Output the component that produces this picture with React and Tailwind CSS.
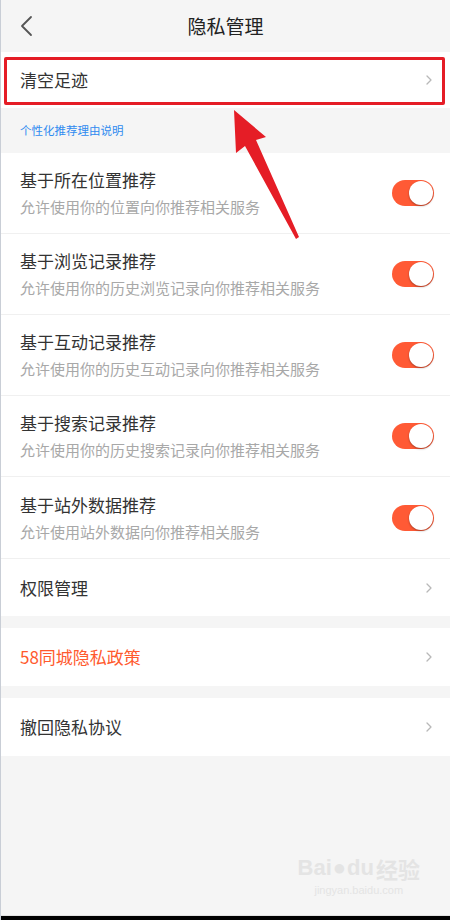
import React from "react";

const font = { fontFamily: '"Noto Sans CJK SC", "Noto Sans", sans-serif' };

function Chevron() {
  return (
    <svg width="8" height="12" viewBox="0 0 8 12" className="shrink-0">
      <path d="M2 2 L6 6 L2 10" fill="none" stroke="#b8b8b8" strokeWidth="1.3" strokeLinecap="round" strokeLinejoin="round" />
    </svg>
  );
}

function Toggle() {
  return (
    <div className="w-[42px] h-[26px] rounded-full bg-[#ff5a35] flex items-center justify-end pr-[1px] shrink-0">
      <div className="w-[24px] h-[24px] rounded-full bg-white shadow-[0_1px_2px_rgba(0,0,0,0.35)]" />
    </div>
  );
}

function ToggleRow({ title, sub, last }) {
  return (
    <div className={"h-[81px] bg-white flex items-center pl-[19px] pr-[16px] " + (last ? "" : "border-b border-[#f0f0f0]")}>
      <div className="flex-1 flex flex-col">
        <div className="text-[17px] leading-[22px] text-[#333]">{title}</div>
        <div className="text-[15px] leading-[20px] text-[#a8a8a8] mt-[6px]">{sub}</div>
      </div>
      <Toggle />
    </div>
  );
}

function LinkRow({ title, color = "text-[#333]", border }) {
  return (
    <div className={"h-[58px] bg-white flex items-center pl-[19px] pr-[17px] " + (border ? "border-t border-[#f0f0f0]" : "")}>
      <div className={"flex-1 text-[17px] " + color}>{title}</div>
      <Chevron />
    </div>
  );
}

export default function App() {
  return (
    <div style={font} className="relative w-[450px] h-[920px] bg-[#f5f5f5] overflow-hidden flex flex-col border-l border-[#c9ced6]">
      {/* Header */}
      <div className="h-[52px] grid grid-cols-[50px_1fr_50px] items-center shrink-0">
        <div className="pl-[19px] flex items-center">
          <svg width="14" height="22" viewBox="0 0 14 22">
            <path d="M11 2 L2 11 L11 20" fill="none" stroke="#555" strokeWidth="1.8" strokeLinecap="round" strokeLinejoin="round" />
          </svg>
        </div>
        <div className="text-center text-[19px] text-[#222]">隐私管理</div>
        <div />
      </div>

      {/* Clear footprints */}
      <div className="h-[56px] bg-white flex items-center pl-[19px] pr-[17px] shrink-0">
        <div className="flex-1 text-[17px] text-[#333]">清空足迹</div>
        <Chevron />
      </div>

      {/* Section header */}
      <div className="h-[45px] flex items-center pl-[19px] shrink-0">
        <span className="text-[11.5px] text-[#2f8bf0]">个性化推荐理由说明</span>
      </div>

      <div className="flex flex-col shrink-0">
        <ToggleRow title="基于所在位置推荐" sub="允许使用你的位置向你推荐相关服务" />
        <ToggleRow title="基于浏览记录推荐" sub="允许使用你的历史浏览记录向你推荐相关服务" />
        <ToggleRow title="基于互动记录推荐" sub="允许使用你的历史互动记录向你推荐相关服务" />
        <ToggleRow title="基于搜索记录推荐" sub="允许使用你的历史搜索记录向你推荐相关服务" />
        <ToggleRow title="基于站外数据推荐" sub="允许使用站外数据向你推荐相关服务" last />
        <LinkRow title="权限管理" border />
      </div>

      <div className="h-[12px] shrink-0" />
      <LinkRow title="58同城隐私政策" color="text-[#ff5a2e]" />
      <div className="h-[12px] shrink-0" />
      <LinkRow title="撤回隐私协议" />

      <div className="flex-1" />
      <div className="h-[1px] bg-[#e2e2e2] shrink-0" />
      <div className="h-[4px] bg-black shrink-0" />

      {/* Annotation: red box */}
      <div className="absolute left-[3px] top-[57px] w-[441px] h-[48px] border-[3px] border-[#e51d26] rounded-[2px] pointer-events-none" />

      {/* Annotation: arrow */}
      <svg className="absolute left-0 top-0 pointer-events-none" width="450" height="920" viewBox="0 0 450 920">
        <polygon points="233,110 265,137 255,140 298,237 295,239 244,146 235,153" fill="#e51d26" />
      </svg>

      {/* Watermark */}
      <div className="absolute right-[30px] bottom-[22px] flex flex-col items-center pointer-events-none">
        <div className="flex items-end text-[22px] font-bold text-[#e4e4e4] leading-none" style={{ fontFamily: '"Liberation Sans", sans-serif' }}>
          <span>Bai</span>
          <span className="mx-[1px] text-[#e4e4e4]">●</span>
          <span>du</span>
          <span className="ml-[2px]" style={font}>经验</span>
        </div>
        <div className="text-[11px] text-[#e4e4e4] mt-[3px]" style={{ fontFamily: '"Liberation Sans", sans-serif' }}>jingyan.baidu.com</div>
      </div>
    </div>
  );
}
